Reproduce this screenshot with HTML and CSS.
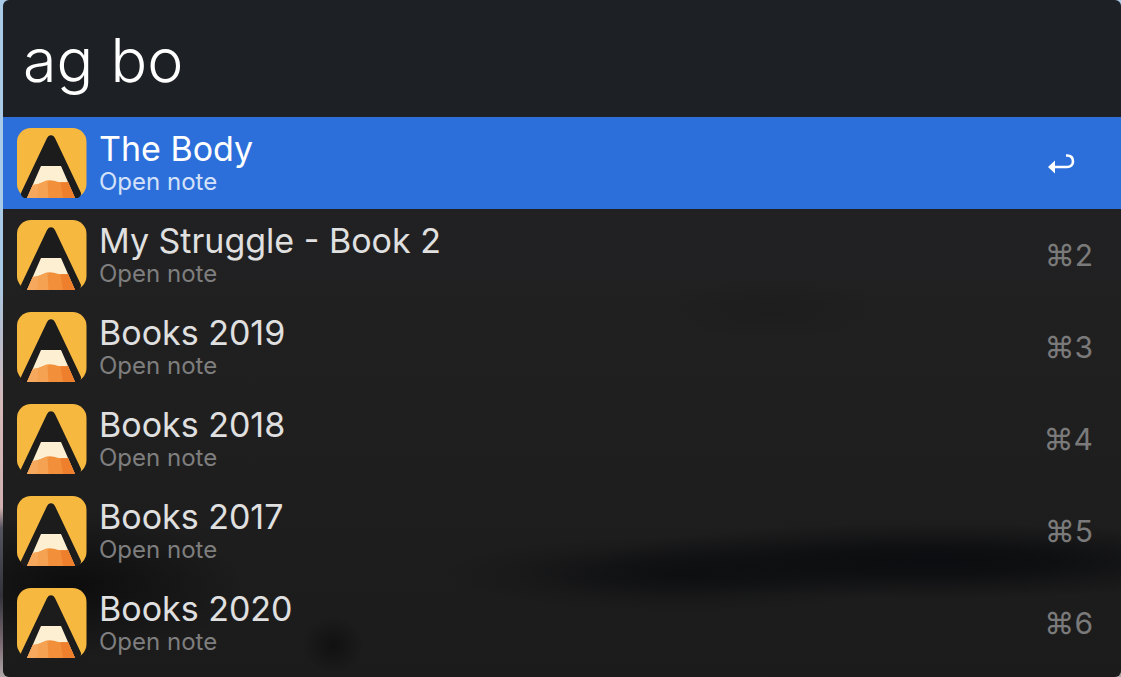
FILE: index.html
```html
<!DOCTYPE html>
<html lang="en">
<head>
<meta charset="utf-8">
<title>Launcher</title>
<link rel="stylesheet" href="styles.css">
</head>
<body>
<svg class="defs" width="0" height="0" aria-hidden="true">
  <symbol id="app" viewBox="0 0 70 70">
    <rect width="69.500" height="70" rx="14" fill="#f6b83f"/>
    <path d="M29.800 10.500C31.500 6 36.500 6 38.200 10.500L63.800 64.500Q65 67.500 61 70H7Q3 67.500 4.200 64.500Z" fill="#1c1c1c"/>
    <path d="M24 38H44L58 70H10Z" fill="#fdf0d2"/>
    <path d="M15.700 57Q21 56.800 25 54.500Q31 51 37 52.800Q43 55 51 54L58 70H10Z" fill="#f28f3b"/>
    <path d="M15.700 57Q19 56.900 22 55.800L20.500 70H10Z" fill="#f6a85c"/>
    <path d="M22 55.800Q26.500 54 30.500 52.500L31.500 70H20.500Z" fill="#f5a252"/>
    <path d="M43.500 54.300Q47 54.500 51 54L58 70H46Z" fill="#ee7f2c"/>
  </symbol>
</svg>
<main class="panel">
  <div class="query">ag bo</div>
  <ul class="results">
    <li class="row selected">
      <svg class="icon"><use href="#app"/></svg>
      <div class="text"><div class="title">The Body</div><div class="sub">Open note</div></div>
      <svg class="return" viewBox="0 0 28 22"><path d="M19 2.500H20C24.500 2.500 26 5.500 26 8.500C26 11.500 24 14 20 14H7" fill="none" stroke="#fff" stroke-width="2.600"/><path d="M1 14L8 7.500V20.500Z" fill="#fff"/></svg>
    </li>
    <li class="row"><svg class="icon"><use href="#app"/></svg><div class="text"><div class="title">My Struggle - Book 2</div><div class="sub">Open note</div></div><div class="key">⌘2</div></li>
    <li class="row"><svg class="icon"><use href="#app"/></svg><div class="text"><div class="title">Books 2019</div><div class="sub">Open note</div></div><div class="key">⌘3</div></li>
    <li class="row"><svg class="icon"><use href="#app"/></svg><div class="text"><div class="title">Books 2018</div><div class="sub">Open note</div></div><div class="key">⌘4</div></li>
    <li class="row"><svg class="icon"><use href="#app"/></svg><div class="text"><div class="title">Books 2017</div><div class="sub">Open note</div></div><div class="key">⌘5</div></li>
    <li class="row"><svg class="icon"><use href="#app"/></svg><div class="text"><div class="title">Books 2020</div><div class="sub">Open note</div></div><div class="key">⌘6</div></li>
  </ul>
</main>
</body>
</html>
```

FILE: styles.css
```css
* { box-sizing: border-box; }
html, body { margin: 0; height: 100%; }
body {
  width: 1121px;
  height: 677px;
  overflow: hidden;
  padding-left: 3px;
  background: linear-gradient(180deg, #a9cbe8 0, #a9cbe8 40%, #b8bccb 50%, #d6b9b8 60%, #d0b0b0 75%, #55555f 78%, #33333b 88%, #7a6a72 95%, #b0a8a8 100%);
  font-family: Inter, "Noto Sans", sans-serif;
}
.defs { position: absolute; }
.panel {
  height: 677px;
  border-radius: 6px;
  overflow: hidden;
  background:
    radial-gradient(ellipse 340px 38px at 930px 561px, rgba(11,12,15,.95) 0, rgba(11,12,15,.8) 35%, rgba(11,12,15,.35) 70%, rgba(11,12,15,0) 100%),
    radial-gradient(ellipse 240px 38px at 680px 574px, rgba(12,13,16,.85) 0, rgba(12,13,16,.6) 35%, rgba(12,13,16,.2) 70%, rgba(12,13,16,0) 100%),
    radial-gradient(ellipse 30px 28px at 330px 645px, #111112 0, rgba(17,17,18,0) 100%),
    radial-gradient(ellipse 170px 70px at 70px 585px, #0d0d0e 0, rgba(13,13,14,.5) 50%, rgba(13,13,14,0) 100%),
    radial-gradient(ellipse 120px 30px at 770px 310px, #1d1d1e 0, rgba(29,29,30,0) 100%),
    linear-gradient(180deg, #1d2024 0, #1d2024 17%, #212123 31%, #201f1f 60%, #1b1b1b 100%);
}
.query {
  height: 117px;
  padding: 22px 0 0 20px;
  font-size: 61px;
  line-height: 76px;
  font-weight: 300;
  color: #fff;
}
.results { list-style: none; margin: 0; padding: 0; }
.row {
  height: 92px;
  display: flex;
  align-items: center;
  padding: 0 28px 0 14px;
}
.selected { background: #2c6fdb; }
.icon { width: 70px; height: 70px; flex: none; }
.text { flex: 1; margin-left: 12px; min-width: 0; }
.title {
  font-size: 34px;
  line-height: 38px;
  color: #e0e0e0;
  margin-top: -1px;
}
.sub {
  font-size: 24px;
  line-height: 26px;
  color: #7e7e7e;
  margin-top: 1px;
}
.selected .title { color: #fff; }
.selected .sub { color: #d3e2f8; }
.key {
  font-size: 30px;
  color: #7a7a7a;
}
.return { width: 28px; height: 22px; margin-right: 18px; margin-top: 1px; }
```
